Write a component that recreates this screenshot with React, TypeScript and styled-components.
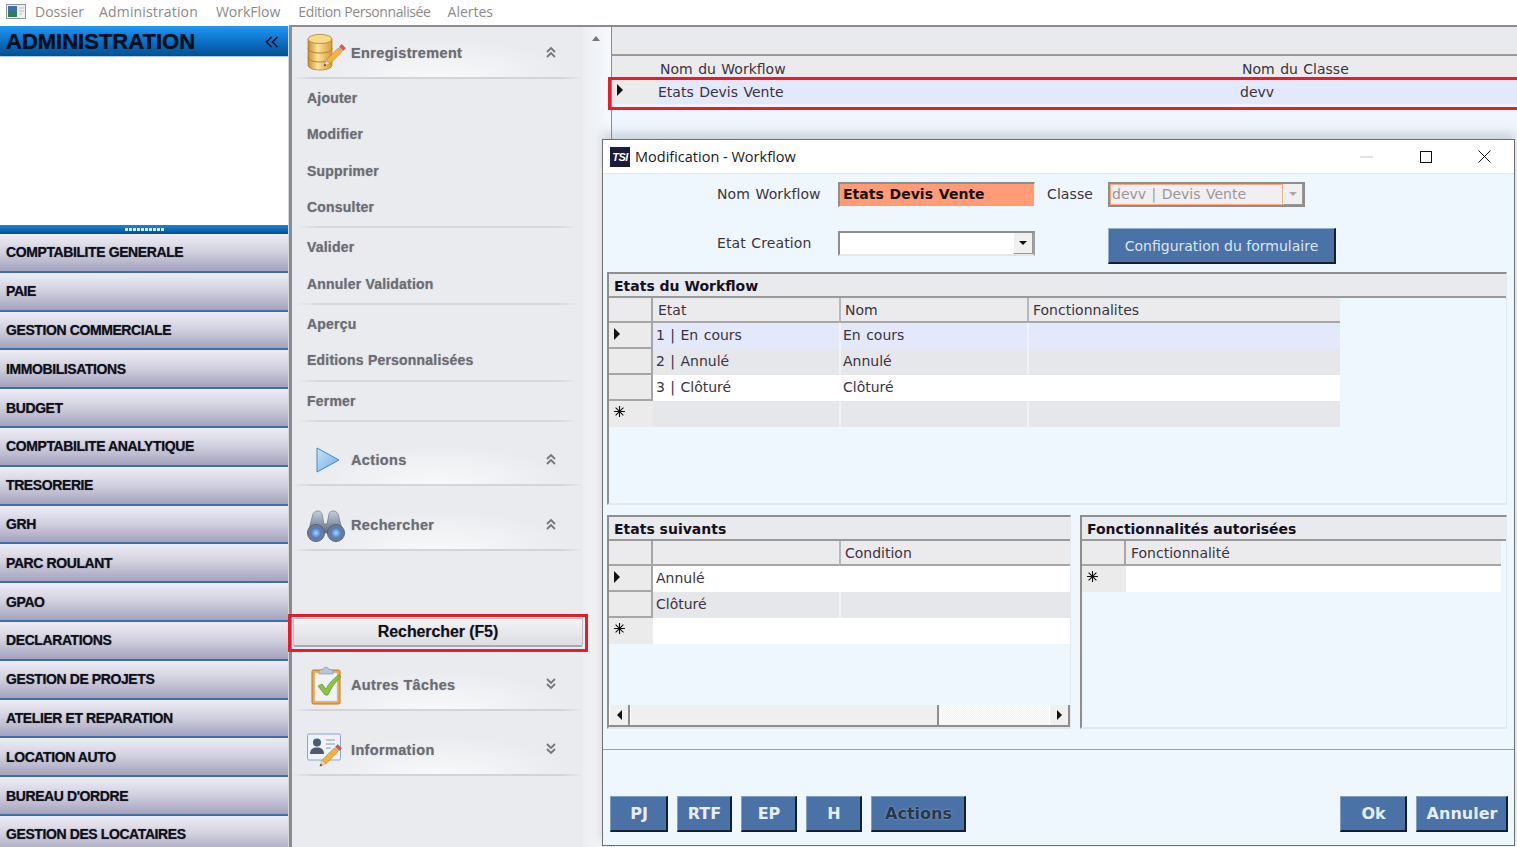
import React from 'react'
import styled, { createGlobalStyle } from 'styled-components'

const GlobalStyle = createGlobalStyle`
  html, body { margin: 0; padding: 0; height: 100%; overflow: hidden; background: #fff; }
  body { font-family: "DejaVu Sans", Verdana, sans-serif; }
  * { box-sizing: border-box; }
`

const Page = styled.div`
  position: relative;
  width: 1517px;
  height: 847px;
  overflow: hidden;
  display: flex;
  flex-direction: column;
  background: #fff;
`
const MenuBar = styled.div`
  height: 25px;
  flex: none;
  display: flex;
  align-items: center;
  padding: 0 0 2px 6px;
  background: #fff;
  font-family: "Open Sans", "Liberation Sans", sans-serif;
  font-size: 14px;
  color: #8a8a8a;
  svg { margin-right: 9px; }
  span { margin-right: 17px; }
  span:nth-of-type(1) { margin-right: 15px; }
  span:nth-of-type(2) { letter-spacing: .15px; margin-right: 18px; }
  span:nth-of-type(3) { margin-right: 18px; }
  span:nth-of-type(4) { letter-spacing: -.4px; }
`
const Body = styled.div`
  flex: 1;
  display: flex;
  min-height: 0;
`
const Sidebar = styled.div`
  width: 289px;
  flex: none;
  display: flex;
  flex-direction: column;
  margin-top: 1px;
  border-right: 1px solid #d5d5d8;
`
const SideHeader = styled.div`
  height: 31px;
  flex: none;
  display: flex;
  align-items: center;
  justify-content: space-between;
  padding: 1px 9px 0 6px;
  background: linear-gradient(#2196f3 0%, #0a6fc4 55%, #02508f 100%);
  border-bottom: 1px solid #a9cdee;
  font-family: "Liberation Sans", sans-serif;
  font-weight: 700;
  font-size: 22px;
  color: #04101f;
  text-shadow: 0 0 1px rgba(4, 16, 31, .7);
`
const SideBlank = styled.div`
  height: 168px;
  flex: none;
  background: #fff;
`
const SideGrip = styled.div`
  height: 9px;
  flex: none;
  background: linear-gradient(#1b85d8, #02508f);
  display: flex;
  align-items: center;
  justify-content: center;
  gap: 1px;
  i { width: 3px; height: 3px; background: #dfe9f3; display: block; }
`
const SideItem = styled.div`
  height: 38.8px;
  flex: none;
  display: flex;
  align-items: center;
  padding: 0 0 0 6px;
  background: linear-gradient(#eeedf5 0%, #d0cfde 50%, #a4a2bd 100%);
  border-bottom: 2px solid #3f6fa5;
  font-family: "Liberation Sans", sans-serif;
  font-weight: 700;
  font-size: 14px;
  letter-spacing: -0.4px;
  color: #101018;
  text-shadow: 0 0 1px rgba(30, 30, 50, .6);
`
const Splitter = styled.div`
  width: 3px;
  flex: none;
  background: #8c8c8c;
`
const TaskPanel = styled.div`
  width: 291px;
  flex: none;
  padding-top: 2px;
  background: #e9ebef;
  border-top: 2px solid #8c8c8c;
  font-family: "Liberation Sans", sans-serif;
  font-weight: 700;
  font-size: 14px;
  letter-spacing: .2px;
  color: #6c6c72;
  text-shadow: 0 0 1px rgba(90, 90, 110, .5);
`
const SectionHead = styled.div<{ $gap?: number }>`
  height: 50px;
  margin-top: ${p => p.$gap || 0}px;
  display: flex;
  align-items: center;
  padding: 0 27px 0 14px;
  border-bottom: 2px solid transparent;
  border-image: linear-gradient(90deg, transparent, #d2d4da 8%, #d2d4da 92%, transparent) 1;
  background: radial-gradient(ellipse 130px 38px at 50% 100%, #f8f9fa, #e9ebef);
  svg.ico { width: 40px; height: 40px; margin-right: 5px; flex: none; }
  svg.chev { margin-bottom: 2px; }
  span { flex: 1; font-size: 14.5px; letter-spacing: .35px; }
`
const Task = styled.div`
  height: 36.33px;
  display: flex;
  align-items: center;
  padding-left: 15px;
  ${SectionHead} + & { margin-top: 1px; }
`
const TaskRule = styled.div`
  height: 2px;
  margin: 1px 4px;
  background: linear-gradient(90deg, transparent, #d6d8dc 8%, #d6d8dc 92%, transparent);
`
const SearchWrap = styled.div`
  position: relative;
  margin: 67px 0 14px 0;
  height: 29px;
  padding: 0 0 0 1px;
  &::after {
    content: '';
    position: absolute;
    left: -4px;
    right: -5px;
    top: -4px;
    bottom: -5px;
    border: 3px solid #ea1c2a;
    pointer-events: none;
  }
`
const SearchButton = styled.div`
  height: 29px;
  display: flex;
  align-items: center;
  justify-content: center;
  padding-top: 1px;
  background: linear-gradient(#f2f3f5, #dcdee3);
  border: 1px solid #bcbcc2;
  border-bottom: 2px solid #a9a9b0;
  border-radius: 2px;
  font-size: 16px;
  letter-spacing: -.1px;
  color: #101018;
`
const ScrollStrip = styled.div`
  width: 28px;
  flex: none;
  border-top: 2px solid #8c8c8c;
  background: linear-gradient(90deg, #eceef2, #f6f9fd);
  display: flex;
  justify-content: center;
  padding-top: 9px;
  i {
    display: block;
    width: 0;
    height: 0;
    border-left: 4px solid transparent;
    border-right: 4px solid transparent;
    border-bottom: 5px solid #777;
    margin-left: -3px;
  }
`
const Main = styled.div`
  flex: 1;
  background: #eff6fe;
  border-top: 2px solid #8c8c8c;
  border-left: 1px solid #8c8c8c;
  font-size: 14px;
  word-spacing: 1px;
  color: #3a3340;
`
const MainBand = styled.div`
  height: 29px;
  background: #e9eaee;
  border-bottom: 2px solid #9a9a9a;
`
const MainHead = styled.div`
  height: 22px;
  display: grid;
  grid-template-columns: 48px 582px 1fr;
  align-items: center;
  background: #ebebee;
  padding-top: 3px;
`
const MainRow = styled.div`
  position: relative;
  height: 24px;
  margin-top: 2px;
  display: grid;
  grid-template-columns: 46px 582px 1fr;
  align-items: center;
  background: #e3e8fb;
  &::after {
    content: '';
    position: absolute;
    left: -4px;
    right: -2px;
    top: -3px;
    bottom: -6px;
    border: 3px solid #ea1c2a;
    border-right: 0;
    pointer-events: none;
  }
`
const RowMark = styled.div`
  height: 100%;
  background: #ebebeb;
  display: flex;
  align-items: center;
  padding: 0 0 4px 5px;
`
const Arrow = styled.i`
  display: block;
  width: 0;
  height: 0;
  border-top: 6px solid transparent;
  border-bottom: 6px solid transparent;
  border-left: 6px solid #111;
`
const Cell = styled.div`
  white-space: nowrap;
  overflow: hidden;
`

const Modal = styled.div`
  position: absolute;
  left: 602px;
  top: 139px;
  width: 913px;
  height: 707px;
  display: flex;
  flex-direction: column;
  background: #eef6fe;
  border: 1px solid #6f6f6f;
  box-shadow: 0 -6px 10px rgba(120, 125, 135, 0.3);
  font-size: 14px;
  word-spacing: 1px;
  color: #3a3340;
`
const TitleBar = styled.div`
  height: 34px;
  flex: none;
  display: flex;
  align-items: center;
  padding-left: 7px;
  background: #fff;
  border-bottom: 1px solid #dfe6ee;
  font-family: "Open Sans", "Liberation Sans", sans-serif;
  font-size: 14.5px;
  word-spacing: 0;
  color: #1a1a1a;
`
const TsiLogo = styled.span`
  width: 20px;
  height: 20px;
  flex: none;
  margin-right: 5px;
  background: #1b1b3a;
  color: #fff;
  font-family: "Liberation Sans", sans-serif;
  font-style: italic;
  font-weight: 700;
  font-size: 11px;
  letter-spacing: -0.5px;
  display: flex;
  align-items: center;
  justify-content: center;
`
const TitleText = styled.span`
  flex: 1;
`
const WinControls = styled.div`
  display: flex;
  align-items: center;
`
const WinButton = styled.div`
  width: 59px;
  height: 34px;
  display: flex;
  align-items: center;
  justify-content: center;
`
const FormGrid = styled.div`
  height: 98px;
  flex: none;
  display: grid;
  grid-template-columns: 235px 197px 73px 197px 1fr;
  grid-template-rows: 40px 58px;
  align-items: center;
  white-space: nowrap;
`
const FieldLabel = styled.div<{ $indent: number }>`
  padding-left: ${p => p.$indent}px;
  letter-spacing: .1px;
`
const NameInput = styled.div`
  height: 25px;
  display: flex;
  align-items: center;
  padding: 0 0 1px 3px;
  background: #ff9c75;
  border-top: 2px solid #8e8e8e;
  border-left: 2px solid #8e8e8e;
  border-bottom: 1px solid #f5f5f5;
  border-right: 1px solid #f5f5f5;
  font-weight: 700;
  color: #17110f;
`
const Combo = styled.div<{ $disabled?: boolean }>`
  height: 25px;
  display: flex;
  align-items: stretch;
  background: ${p => (p.$disabled ? '#f0f0f0' : '#fff')};
  border: 2px solid #8e8e8e;
  border-right-color: #a0a0a0;
  border-bottom-color: #e6e6e6;
  color: #99969c;
  ${p => p.$disabled && 'border-bottom-color: #8e8e8e; border-right-color: #8e8e8e;'}
`
const ComboText = styled.div<{ $disabled?: boolean }>`
  flex: 1;
  padding-left: 1px;
  line-height: 19px;
  ${p => p.$disabled && 'border: 1px solid #ffa780;'}
`
const ComboDrop = styled.div<{ $disabled?: boolean }>`
  width: 20px;
  background: #f0f0f0;
  border-left: 1px solid #fff;
  border-right: 1px solid #9a9a9a;
  border-bottom: 1px solid #9a9a9a;
  display: flex;
  align-items: center;
  justify-content: center;
  i {
    display: block;
    width: 0;
    height: 0;
    border-left: 4px solid transparent;
    border-right: 4px solid transparent;
    border-top: 4px solid ${p => (p.$disabled ? '#a8a8a8' : '#111')};
  }
`
const ConfigButton = styled.div`
  width: 228px;
  height: 36px;
  align-self: start;
  margin-top: 14px;
  display: flex;
  align-items: center;
  justify-content: center;
  background: #4a72a6;
  border-top: 1px solid #8fb0d4;
  border-left: 1px solid #8fb0d4;
  border-right: 2px solid #14202e;
  border-bottom: 2px solid #14202e;
  color: #dbe6f2;
  font-size: 14px;
  word-spacing: 0;
`
const Panels = styled.div`
  flex: none;
  display: flex;
  flex-direction: column;
  gap: 10px;
  padding: 0 7px 0 4px;
`
const PanelRow = styled.div`
  display: flex;
  gap: 9px;
`
const Panel = styled.div<{ $h: number; $w: number }>`
  height: ${p => p.$h}px;
  width: ${p => p.$w}px;
  flex: none;
  display: flex;
  flex-direction: column;
  border-top: 2px solid #8e8e8e;
  border-left: 2px solid #8e8e8e;
  border-right: 1px solid #e3e8ee;
  border-bottom: 2px solid #e3e8ee;
`
const PanelTitle = styled.div`
  height: 24px;
  flex: none;
  display: flex;
  align-items: center;
  padding: 1px 0 0 5px;
  background: #e9eaee;
  border-bottom: 2px solid #9a9a9a;
  font-weight: 700;
  font-size: 14px;
  word-spacing: 0;
  color: #14101c;
`
const GridRow = styled.div<{ $cols: string; $bg: string; $h?: number }>`
  height: ${p => p.$h || 26}px;
  flex: none;
  display: grid;
  grid-template-columns: ${p => p.$cols};
  background: ${p => p.$bg};
`
const HeadCell = styled.div<{ $sep?: boolean }>`
  display: flex;
  align-items: center;
  padding-left: ${p => (p.$sep ? 4 : 5)}px;
  background: #ebebee;
  border-bottom: 2px solid #a6a6a6;
  border-left: ${p => (p.$sep ? '2px solid #b8b8bc' : '0')};
  font-size: 14px;
`
const Corner = styled.div`
  background: #ebebee;
  border-right: 2px solid #a6a6a6;
  border-bottom: 2px solid #a6a6a6;
`
const RowHead = styled.div<{ $star?: boolean }>`
  background: #ebebeb;
  display: flex;
  align-items: center;
  padding: 0 0 3px 5px;
  ${p => !p.$star && 'border-right: 2px solid #a6a6a6; border-bottom: 2px solid #a6a6a6;'}
  ${p => p.$star && 'align-items: flex-start; padding: 5px 0 0 5px;'}
`
const DataCell = styled.div<{ $sep?: boolean }>`
  display: flex;
  align-items: center;
  padding: 0 0 2px ${p => (p.$sep ? 2 : 3)}px;
  border-left: ${p => (p.$sep ? '2px solid rgba(255,255,255,.45)' : '0')};
  white-space: nowrap;
`
const GridGap = styled.div`
  background: #eef6fe;
`
const HScroll = styled.div`
  margin-top: auto;
  height: 22px;
  flex: none;
  display: flex;
  background: #f2f2f2;
  border-bottom: 2px solid #8e8e8e;
`
const ScrollEnd = styled.div`
  width: 21px;
  flex: none;
  display: flex;
  align-items: center;
  justify-content: center;
  background: #f0f0f0;
  border-right: 2px solid #8e8e8e;
  border-left: 1px solid #fff;
`
const ScrollThumb = styled.div`
  width: 309px;
  flex: none;
  background: #efefef;
  border-right: 2px solid #8e8e8e;
  border-left: 1px solid #fff;
`
const ScrollTrack = styled.div`
  flex: 1;
  background: repeating-conic-gradient(#f3f3f3 0% 25%, #fbfbfb 0% 50%) 0 0 / 2px 2px;
`
const SmallArrow = styled.i<{ $left?: boolean }>`
  display: block;
  width: 0;
  height: 0;
  border-top: 5px solid transparent;
  border-bottom: 5px solid transparent;
  ${p => (p.$left ? 'border-right: 5px solid #111;' : 'border-left: 5px solid #111;')}
`
const Footer = styled.div`
  flex: none;
  margin-top: 20px;
  height: 100px;
  border-top: 1px solid #66aef0;
  padding: 46px 6px 0 7px;
  display: flex;
  align-items: flex-start;
  gap: 9px;
`
const Spacer = styled.div`
  flex: 1;
`
const ActionButton = styled.div<{ $w: number; $dark?: boolean }>`
  width: ${p => p.$w}px;
  height: 36px;
  display: flex;
  align-items: center;
  justify-content: center;
  padding-left: 1px;
  background: #4a72a6;
  border-top: 1px solid #7f9fc6;
  border-left: 1px solid #7f9fc6;
  border-right: 2px solid #14202e;
  border-bottom: 2px solid #14202e;
  font-weight: 700;
  font-size: 16px;
  color: ${p => (p.$dark ? '#24384f' : '#e6edf5')};
  ${p => p.$dark && 'text-shadow: 0 0 2px #9fb6d2;'}
`

const DoubleChevron = ({ down }: { down?: boolean }) => (
  <svg className="chev" width="10" height="12" viewBox="0 0 10 12" fill="none" stroke="#777" strokeWidth="1.8">
    {down ? (
      <path d="M1 1l4 4 4-4M1 6l4 4 4-4" />
    ) : (
      <path d="M1 6l4-4 4 4M1 11l4-4 4 4" />
    )}
  </svg>
)

const Pencil = ({ x, y }: { x: number; y: number }) => (
  <g transform={`translate(${x} ${y}) rotate(45)`}>
    <rect x="-2.6" y="-15" width="5.2" height="3.5" fill="#e2574c" stroke="#8a3a32" strokeWidth=".5" />
    <rect x="-2.6" y="-11.5" width="5.2" height="1.6" fill="#c9c9c9" />
    <rect x="-2.6" y="-10" width="5.2" height="17" fill="#f3b33d" stroke="#a8701c" strokeWidth=".5" />
    <path d="M-2.6 7L0 13l2.6-6z" fill="#f4dcb4" stroke="#a8701c" strokeWidth=".4" />
    <path d="M-1 10.5L0 13l1-2.5z" fill="#33363f" />
  </g>
)

const DbIcon = () => (
  <svg className="ico" viewBox="0 0 40 40">
    <defs>
      <linearGradient id="db" x1="0" x2="1" y1="0" y2="0">
        <stop offset="0" stopColor="#c98a2a" />
        <stop offset=".4" stopColor="#fbe3a0" />
        <stop offset="1" stopColor="#d99a35" />
      </linearGradient>
    </defs>
    <path d="M2 6v26c0 3 5 5 12 5s12-2 12-5V6z" fill="url(#db)" stroke="#a9751f" strokeWidth=".7" />
    <ellipse cx="14" cy="6" rx="12" ry="4.6" fill="#f7d98a" stroke="#a9751f" strokeWidth=".7" />
    <path d="M2 15c0 3 5 5 12 5s12-2 12-5M2 24c0 3 5 5 12 5s12-2 12-5" fill="none" stroke="#b57f26" strokeWidth="1" />
    <Pencil x={27} y={24} />
  </svg>
)

const PlayIcon = () => (
  <svg className="ico" viewBox="0 0 40 40">
    <defs>
      <linearGradient id="pl" x1="0" x2="1" y1="0" y2="1">
        <stop offset="0" stopColor="#c5e3f8" />
        <stop offset="1" stopColor="#6fb0e6" />
      </linearGradient>
    </defs>
    <path d="M11 8l22 12-22 12z" fill="url(#pl)" stroke="#4d86c4" strokeWidth="1" />
  </svg>
)

const BinocularIcon = () => (
  <svg className="ico" viewBox="0 0 40 40">
    <defs>
      <linearGradient id="bn" x1="0" x2="0" y1="0" y2="1">
        <stop offset="0" stopColor="#c8d0dc" />
        <stop offset="1" stopColor="#5b6a82" />
      </linearGradient>
      <radialGradient id="ln">
        <stop offset="0" stopColor="#a9d4fb" />
        <stop offset="1" stopColor="#3f74c4" />
      </radialGradient>
    </defs>
    <path d="M7 9c2-4 8-4 9 0l2 10h3l2-10c1-4 7-4 9 0l5 19H2z" fill="url(#bn)" stroke="#5b6678" strokeWidth=".6" />
    <circle cx="10" cy="28" r="8.5" fill="#6e7c94" stroke="#55617a" />
    <circle cx="30" cy="28" r="8.5" fill="#6e7c94" stroke="#55617a" />
    <circle cx="10" cy="28" r="5.6" fill="url(#ln)" />
    <circle cx="30" cy="28" r="5.6" fill="url(#ln)" />
  </svg>
)

const ClipboardIcon = () => (
  <svg className="ico" viewBox="0 0 40 40">
    <rect x="6" y="5" width="28" height="34" rx="1.5" fill="#eda94a" stroke="#b97a25" />
    <rect x="9" y="8" width="22" height="28" fill="#eef3f8" stroke="#cfd6de" strokeWidth=".6" />
    <path d="M13 6c0-1.500 3-1.500 4-1.500 0-3 6-3 6 0 1 0 4 0 4 1.500v3H13z" fill="#b9c6d8" stroke="#7f8fa6" strokeWidth=".6" />
    <path d="M12 21l4-2 4 5c3-6 7-10 13-14l2 2c-6 5-10 11-13 18h-3z" fill="#8ac53e" stroke="#5e932a" strokeWidth=".7" />
  </svg>
)

const CardIcon = () => (
  <svg className="ico" viewBox="0 0 40 40">
    <rect x="1.500" y="4" width="33" height="26" rx="1.500" fill="#eef3fb" stroke="#8ea4c9" />
    <circle cx="11" cy="12.500" r="4" fill="#4f5a6c" />
    <path d="M4 24c0-5 3-6.500 7-6.500s7 1.500 7 6.500z" fill="#4f5a6c" />
    <path d="M20 10h9M20 14h9M20 18h5" stroke="#a9b6c9" strokeWidth="1.300" />
    <Pencil x={23} y={27} />
  </svg>
)

const AppIcon = () => (
  <svg width="20" height="15" viewBox="0 0 20 15">
    <rect x=".5" y=".5" width="19" height="14" fill="#eef0f2" stroke="#8f959c" />
    <rect x="2" y="2" width="9" height="11" fill="#2e7d5e" />
    <rect x="2" y="2" width="9" height="5" fill="#3f6fa8" />
    <path d="M13 4h5M13 7h5M13 10h3" stroke="#b6bcc4" />
  </svg>
)

const Star = () => (
  <svg width="11" height="11" viewBox="0 0 11 11" stroke="#111" strokeWidth="1.100">
    <path d="M5.500 0v11M0 5.500h11M1.600 1.600l7.800 7.800M9.400 1.600l-7.800 7.800" />
  </svg>
)

const sideItems = [
  'COMPTABILITE GENERALE', 'PAIE', 'GESTION COMMERCIALE', 'IMMOBILISATIONS', 'BUDGET',
  'COMPTABILITE ANALYTIQUE', 'TRESORERIE', 'GRH', 'PARC ROULANT', 'GPAO', 'DECLARATIONS',
  'GESTION DE PROJETS', 'ATELIER ET REPARATION', 'LOCATION AUTO', "BUREAU D'ORDRE",
  'GESTION DES LOCATAIRES',
]

const etatCols = '44px 186px 188px 313px 1fr'
const suivCols = '44px 186px 1fr'
const foncCols = '44px 375px 1fr'

export default function App() {
  return (
    <Page>
      <GlobalStyle />
      <MenuBar>
        <AppIcon />
        <span>Dossier</span>
        <span>Administration</span>
        <span>WorkFlow</span>
        <span>Edition Personnalisée</span>
        <span>Alertes</span>
      </MenuBar>
      <Body>
        <Sidebar>
          <SideHeader>
            <span>ADMINISTRATION</span>
            <svg width="14" height="12" viewBox="0 0 14 12" fill="none" stroke="#04101f" strokeWidth="1.600">
              <path d="M6.500 1L1.500 6l5 5M12.500 1l-5 5 5 5" />
            </svg>
          </SideHeader>
          <SideBlank />
          <SideGrip>
            {Array.from({ length: 10 }).map((_, i) => <i key={i} />)}
          </SideGrip>
          {sideItems.map(item => <SideItem key={item}>{item}</SideItem>)}
        </Sidebar>
        <Splitter />
        <TaskPanel>
          <SectionHead>
            <DbIcon />
            <span>Enregistrement</span>
            <DoubleChevron />
          </SectionHead>
          <Task>Ajouter</Task>
          <Task>Modifier</Task>
          <Task>Supprimer</Task>
          <Task>Consulter</Task>
          <TaskRule />
          <Task>Valider</Task>
          <Task>Annuler Validation</Task>
          <TaskRule />
          <Task>Aperçu</Task>
          <Task>Editions Personnalisées</Task>
          <TaskRule />
          <Task>Fermer</Task>
          <TaskRule />
          <SectionHead $gap={14}>
            <PlayIcon />
            <span>Actions</span>
            <DoubleChevron />
          </SectionHead>
          <SectionHead $gap={15}>
            <BinocularIcon />
            <span>Rechercher</span>
            <DoubleChevron />
          </SectionHead>
          <SearchWrap>
            <SearchButton>Rechercher (F5)</SearchButton>
          </SearchWrap>
          <SectionHead>
            <ClipboardIcon />
            <span>Autres Tâches</span>
            <DoubleChevron down />
          </SectionHead>
          <SectionHead $gap={15}>
            <CardIcon />
            <span>Information</span>
            <DoubleChevron down />
          </SectionHead>
        </TaskPanel>
        <ScrollStrip><i /></ScrollStrip>
        <Main>
          <MainBand />
          <MainHead>
            <span />
            <Cell>Nom du Workflow</Cell>
            <Cell>Nom du Classe</Cell>
          </MainHead>
          <MainRow>
            <RowMark><Arrow /></RowMark>
            <Cell>Etats Devis Vente</Cell>
            <Cell>devv</Cell>
          </MainRow>
        </Main>
      </Body>

      <Modal>
        <TitleBar>
          <TsiLogo>TSI</TsiLogo>
          <TitleText>Modification - Workflow</TitleText>
          <WinControls>
            <WinButton>
              <svg width="13" height="2"><path d="M0 1h13" stroke="#c4c4c4" /></svg>
            </WinButton>
            <WinButton>
              <svg width="12" height="12"><rect x=".5" y=".5" width="11" height="11" fill="none" stroke="#111" /></svg>
            </WinButton>
            <WinButton>
              <svg width="13" height="13"><path d="M.5.500l12 12M12.500.500l-12 12" stroke="#111" /></svg>
            </WinButton>
          </WinControls>
        </TitleBar>
        <FormGrid>
          <FieldLabel $indent={114}>Nom Workflow</FieldLabel>
          <NameInput>Etats Devis Vente</NameInput>
          <FieldLabel $indent={12}>Classe</FieldLabel>
          <Combo $disabled>
            <ComboText $disabled>devv | Devis Vente</ComboText>
            <ComboDrop $disabled><i /></ComboDrop>
          </Combo>
          <span />
          <FieldLabel $indent={114}>Etat Creation</FieldLabel>
          <Combo>
            <ComboText />
            <ComboDrop><i /></ComboDrop>
          </Combo>
          <span />
          <ConfigButton>Configuration du formulaire</ConfigButton>
          <span />
        </FormGrid>
        <Panels>
          <Panel $h={233} $w={900}>
            <PanelTitle>Etats du Workflow</PanelTitle>
            <GridRow $cols={etatCols} $bg="transparent" $h={25}>
              <Corner />
              <HeadCell>Etat</HeadCell>
              <HeadCell $sep>Nom</HeadCell>
              <HeadCell $sep>Fonctionnalites</HeadCell>
            </GridRow>
            <GridRow $cols={etatCols} $bg="#e3e8fb">
              <RowHead><Arrow /></RowHead>
              <DataCell>1 | En cours</DataCell>
              <DataCell $sep>En cours</DataCell>
              <DataCell $sep />
              <GridGap />
            </GridRow>
            <GridRow $cols={etatCols} $bg="#e6e7ea">
              <RowHead />
              <DataCell>2 | Annulé</DataCell>
              <DataCell $sep>Annulé</DataCell>
              <DataCell $sep />
              <GridGap />
            </GridRow>
            <GridRow $cols={etatCols} $bg="#fff">
              <RowHead />
              <DataCell>3 | Clôturé</DataCell>
              <DataCell $sep>Clôturé</DataCell>
              <DataCell $sep />
              <GridGap />
            </GridRow>
            <GridRow $cols={etatCols} $bg="#e6e7ea">
              <RowHead $star><Star /></RowHead>
              <DataCell />
              <DataCell $sep />
              <DataCell $sep />
              <GridGap />
            </GridRow>
          </Panel>
          <PanelRow>
            <Panel $h={214} $w={464}>
              <PanelTitle>Etats suivants</PanelTitle>
              <GridRow $cols={suivCols} $bg="transparent" $h={25}>
                <Corner />
                <HeadCell />
                <HeadCell $sep>Condition</HeadCell>
              </GridRow>
              <GridRow $cols={suivCols} $bg="#fff">
                <RowHead><Arrow /></RowHead>
                <DataCell>Annulé</DataCell>
                <DataCell $sep />
              </GridRow>
              <GridRow $cols={suivCols} $bg="#e6e7ea">
                <RowHead />
                <DataCell>Clôturé</DataCell>
                <DataCell $sep />
              </GridRow>
              <GridRow $cols={suivCols} $bg="#fff">
                <RowHead $star><Star /></RowHead>
                <DataCell />
                <DataCell $sep />
              </GridRow>
              <HScroll>
                <ScrollEnd><SmallArrow $left /></ScrollEnd>
                <ScrollThumb />
                <ScrollTrack />
                <ScrollEnd><SmallArrow /></ScrollEnd>
              </HScroll>
            </Panel>
            <Panel $h={214} $w={427}>
              <PanelTitle>Fonctionnalités autorisées</PanelTitle>
              <GridRow $cols={foncCols} $bg="transparent" $h={25}>
                <Corner />
                <HeadCell>Fonctionnalité</HeadCell>
              </GridRow>
              <GridRow $cols={foncCols} $bg="#fff">
                <RowHead $star><Star /></RowHead>
                <DataCell />
                <GridGap />
              </GridRow>
            </Panel>
          </PanelRow>
        </Panels>
        <Footer>
          <ActionButton $w={58}>PJ</ActionButton>
          <ActionButton $w={55}>RTF</ActionButton>
          <ActionButton $w={56}>EP</ActionButton>
          <ActionButton $w={56}>H</ActionButton>
          <ActionButton $w={95} $dark>Actions</ActionButton>
          <Spacer />
          <ActionButton $w={67}>Ok</ActionButton>
          <ActionButton $w={92}>Annuler</ActionButton>
        </Footer>
      </Modal>
    </Page>
  )
}
